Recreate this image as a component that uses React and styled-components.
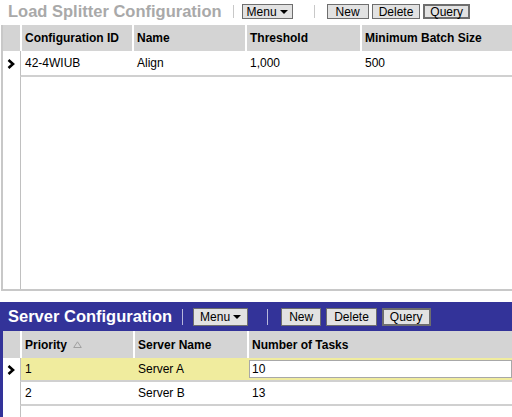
import React from 'react';
import styled, { createGlobalStyle } from 'styled-components';

const Global = createGlobalStyle`
  html, body { margin: 0; padding: 0; background: #fff; }
  body {
    font-family: "Liberation Sans", Arial, sans-serif;
    font-size: 12px;
    color: #000;
    width: 512px;
    height: 417px;
    overflow: hidden;
  }
`;

const Page = styled.div`
  display: flex;
  flex-direction: column;
  height: 417px;
`;

const Panel = styled.section`
  display: flex;
  flex-direction: column;
  height: ${p => (p.$h ? `${p.$h}px` : 'auto')};
  flex: ${p => (p.$h ? '0 0 auto' : '1')};
  min-height: 0;
  margin-top: ${p => p.$mt || 0}px;
`;

const TitleBar = styled.header`
  display: flex;
  align-items: center;
  flex: 0 0 auto;
  height: ${p => (p.$active ? 29 : 23)}px;
  padding-left: 8px;
  padding-bottom: ${p => (p.$active ? 0 : 2)}px;
  background: ${p => (p.$active ? '#333399' : '#fff')};
`;

const Title = styled.h1`
  margin: 0;
  font-size: 16.5px;
  font-weight: bold;
  white-space: nowrap;
  color: ${p => (p.$active ? '#fff' : '#a9a9a9')};
`;

const Sep = styled.span`
  width: 1px;
  height: ${p => (p.$active ? 16 : 13)}px;
  background: ${p => (p.$active ? '#b8b8dc' : '#c8c8c8')};
  margin: 0 ${p => p.$r}px 0 ${p => p.$l}px;
`;

const BtnRow = styled.div`
  display: flex;
  gap: ${p => (p.$active ? 5 : 3)}px;
`;

const Btn = styled.button`
  font-family: "Liberation Sans", Arial, sans-serif;
  font-size: 12px;
  color: #000;
  height: ${p => (p.$active ? 18 : 15)}px;
  padding: 0 ${p => p.$px ?? (p.$focus ? 6 : 7)}px;
  border: ${p => (p.$focus ? 2 : 1)}px solid #6e6e6e;
  background: #e2e2e2;
  display: inline-flex;
  align-items: center;
  gap: 3px;
  line-height: 1;
  margin: 0;
`;

const Caret = () => (
  <svg width="8" height="4" viewBox="0 0 8 4">
    <polygon points="0,0 8,0 4,4" fill="#000" />
  </svg>
);

const Grid = styled.div`
  flex: 1;
  display: flex;
  flex-direction: column;
  min-height: 0;
  margin-left: ${p => (p.$active ? 0 : 1)}px;
  border-left: ${p => (p.$active ? '3px solid #333399' : '2px solid #c8c8c8')};
  border-bottom: ${p => (p.$active ? 'none' : '2px solid #c8c8c8')};
`;

const Row = styled.div`
  display: grid;
  grid-template-columns: ${p => p.$cols};
  height: ${p => (p.$h ? `${p.$h}px` : 'auto')};
  flex: ${p => (p.$h ? '0 0 auto' : '1')};
  background: ${p => (p.$head ? '#d4d4d4' : '#fff')};
`;

const SelCell = styled.div`
  display: flex;
  align-items: center;
  justify-content: center;
  padding-right: 2px;
`;

const HeadCell = styled.div`
  display: flex;
  align-items: center;
  gap: 6px;
  border-left: 2px solid #fff;
  padding-left: 3px;
  font-weight: bold;
  white-space: nowrap;
  overflow: hidden;
`;

const Cell = styled.div`
  display: flex;
  align-items: center;
  padding-left: ${p => (p.$first ? 4 : 5)}px;
  border-left: ${p => (p.$first ? '1px solid #c0c0c0' : 'none')};
  border-bottom: ${p => (p.$line ? '2px solid #d0d0d0' : 'none')};
  background: ${p => (p.$sel ? '#f0ec9e' : 'transparent')};
  white-space: nowrap;
  overflow: hidden;
`;

const EditCell = styled.div`
  display: flex;
  align-items: stretch;
  padding: 2px 0 2px 2px;
  border-bottom: 2px solid #d0d0d0;
  background: #f0ec9e;
`;

const Input = styled.input`
  flex: 1;
  min-width: 0;
  margin: 0;
  border: 1px solid #a8a8a8;
  background: #fff;
  padding: 0 2px;
  font-family: "Liberation Sans", Arial, sans-serif;
  font-size: 12px;
  color: #000;
  outline: none;
`;

const Chevron = () => (
  <svg width="8" height="10" viewBox="0 0 8 10">
    <polyline points="1.5,1 6,5 1.5,9" fill="none" stroke="#000" strokeWidth="2.6" />
  </svg>
);

const SortUp = () => (
  <svg width="9" height="7" viewBox="0 0 9 7">
    <polygon points="4.5,0.8 8.3,6.5 0.7,6.5" fill="none" stroke="#a0a0a0" strokeWidth="1" />
  </svg>
);

const TOP_COLS = '17px 112px 113px 115px 1fr';
const BOT_COLS = '17px 113px 114px 1fr';

export default function App() {
  return (
    <>
      <Global />
      <Page>
        <Panel $h={291}>
          <TitleBar>
            <Title>Load Splitter Configuration</Title>
            <Sep $l={11} $r={8} />
            <Btn $px={4}>Menu<Caret /></Btn>
            <Sep $l={21} $r={12} />
            <BtnRow>
              <Btn $px={8}>New</Btn>
              <Btn $px={6}>Delete</Btn>
              <Btn $focus $px={5}>Query</Btn>
            </BtnRow>
          </TitleBar>
          <Grid>
            <Row $head $cols={TOP_COLS} $h={26}>
              <SelCell />
              <HeadCell>Configuration ID</HeadCell>
              <HeadCell>Name</HeadCell>
              <HeadCell>Threshold</HeadCell>
              <HeadCell>Minimum Batch Size</HeadCell>
            </Row>
            <Row $cols={TOP_COLS} $h={26}>
              <SelCell><Chevron /></SelCell>
              <Cell $first $line>42-4WIUB</Cell>
              <Cell $line>Align</Cell>
              <Cell $line>1,000</Cell>
              <Cell $line>500</Cell>
            </Row>
            <Row $cols={TOP_COLS}>
              <SelCell />
              <Cell $first />
            </Row>
          </Grid>
        </Panel>

        <Panel $mt={11}>
          <TitleBar $active>
            <Title $active>Server Configuration</Title>
            <Sep $active $l={10} $r={10} />
            <Btn $active $px={6}>Menu<Caret /></Btn>
            <Sep $active $l={19} $r={13} />
            <BtnRow $active>
              <Btn $active>New</Btn>
              <Btn $active>Delete</Btn>
              <Btn $active $focus>Query</Btn>
            </BtnRow>
          </TitleBar>
          <Grid $active>
            <Row $head $cols={BOT_COLS} $h={27}>
              <SelCell />
              <HeadCell>Priority<SortUp /></HeadCell>
              <HeadCell>Server Name</HeadCell>
              <HeadCell>Number of Tasks</HeadCell>
            </Row>
            <Row $cols={BOT_COLS} $h={24}>
              <SelCell><Chevron /></SelCell>
              <Cell $first $line $sel>1</Cell>
              <Cell $line $sel>Server A</Cell>
              <EditCell><Input readOnly value="10" /></EditCell>
            </Row>
            <Row $cols={BOT_COLS} $h={24}>
              <SelCell />
              <Cell $first $line>2</Cell>
              <Cell $line>Server B</Cell>
              <Cell $line>13</Cell>
            </Row>
            <Row $cols={BOT_COLS}>
              <SelCell />
              <Cell $first />
            </Row>
          </Grid>
        </Panel>
      </Page>
    </>
  );
}
